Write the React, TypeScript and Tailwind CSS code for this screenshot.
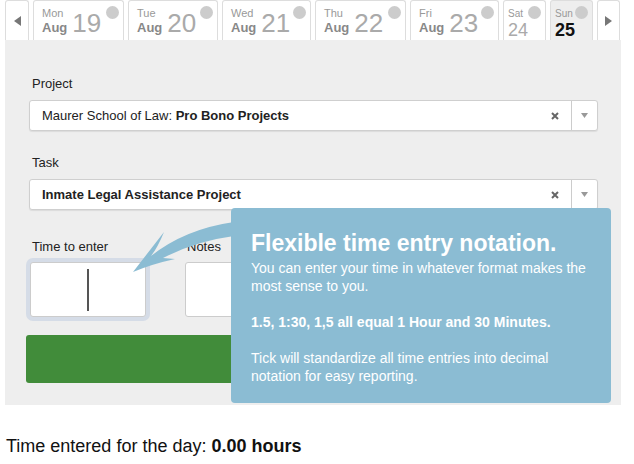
import React from "react";

type Day = { day: string; mon?: string; num: string; w: string; narrow?: boolean; active?: boolean };

const DAYS: Day[] = [
  { day: "Mon", mon: "Aug", num: "19", w: "w-[91px]" },
  { day: "Tue", mon: "Aug", num: "20", w: "w-[90px]" },
  { day: "Wed", mon: "Aug", num: "21", w: "w-[89px]" },
  { day: "Thu", mon: "Aug", num: "22", w: "w-[91px]" },
  { day: "Fri", mon: "Aug", num: "23", w: "w-[89px]" },
  { day: "Sat", num: "24", w: "w-[43px]", narrow: true },
  { day: "Sun", num: "25", w: "w-[43px]", narrow: true, active: true },
];

function DayTab({ d }: { d: Day }) {
  return (
    <div
      className={`relative h-10 ${d.w} border border-b-0 border-[#ddd] rounded-t-[3px] ${
        d.active ? "bg-[#eee]" : "bg-white"
      }`}
    >
      {d.narrow ? (
        <div className="pl-[4px] pt-[8px] leading-none">
          <div className="text-[10px] text-[#999]">{d.day}</div>
          <div
            className={`mt-[2px] text-[18px] ${
              d.active ? "font-bold text-[#111]" : "text-[#aaa]"
            }`}
          >
            {d.num}
          </div>
        </div>
      ) : (
        <div className="pl-[8px] pt-[7px] leading-none whitespace-nowrap">
          <span className="inline-block align-baseline">
            <span className="block text-[11px] text-[#999]">{d.day}</span>
            <span className="block mt-[2px] text-[13px] font-bold text-[#888]">{d.mon}</span>
          </span>
          <span className="ml-[5px] text-[26px] text-[#aaa]">{d.num}</span>
        </div>
      )}
      <span className="absolute top-[5px] right-[4px] w-[13px] h-[13px] rounded-full bg-[#ccc]" />
    </div>
  );
}

function Caret({ dir }: { dir: "left" | "right" }) {
  return (
    <svg width="7" height="10" viewBox="0 0 7 10">
      {dir === "left" ? (
        <path d="M7 0 L0 5 L7 10 Z" fill="#777" />
      ) : (
        <path d="M0 0 L7 5 L0 10 Z" fill="#777" />
      )}
    </svg>
  );
}

function Select({ children }: { children: React.ReactNode }) {
  return (
    <div className="h-[31px] bg-white border border-[#cfcfcf] rounded-[3px] shadow-[0_1px_1px_rgba(0,0,0,0.08)] flex items-center">
      <div className="flex-1 pl-3 text-[13px] text-[#222]">{children}</div>
      <svg width="8" height="8" viewBox="0 0 8 8" className="mr-[12px]">
        <path d="M1 1 L7 7 M7 1 L1 7" stroke="#666" strokeWidth="2" />
      </svg>
      <div className="w-[26px] h-full border-l border-[#ccc] flex items-center justify-center">
        <svg width="7" height="5" viewBox="0 0 7 5">
          <path d="M0 0 L7 0 L3.5 5 Z" fill="#999" />
        </svg>
      </div>
    </div>
  );
}

export default function App() {
  return (
    <div className="relative w-[634px] h-[464px] bg-white overflow-hidden font-['Liberation_Sans',Arial,sans-serif]">
      <div className="flex gap-1 pl-[5px] h-10">
        <div className="w-[24px] h-10 bg-white border border-b-0 border-[#ddd] rounded-t-[3px] flex items-center justify-center">
          <Caret dir="left" />
        </div>
        {DAYS.map((d) => (
          <DayTab key={d.day} d={d} />
        ))}
        <div className="w-[23px] h-10 bg-white border border-b-0 border-[#ddd] rounded-t-[3px] flex items-center justify-center">
          <Caret dir="right" />
        </div>
      </div>

      <div className="relative ml-[5px] w-[616px] h-[365px] bg-[#eee] pt-[36px] pl-[24px] pr-[23px]">
        <div className="text-[13px] leading-4 text-[#222] pl-[3px]">Project</div>
        <div className="mt-2">
          <Select>
            Maurer School of Law: <b>Pro Bono Projects</b>
          </Select>
        </div>

        <div className="mt-6 text-[13px] leading-4 text-[#222] pl-[3px]">Task</div>
        <div className="mt-2">
          <Select>
            <b>Inmate Legal Assistance Project</b>
          </Select>
        </div>

        <div className="mt-[29px] flex gap-[39px] pl-px">
          <div className="w-[116px]">
            <div className="text-[13px] leading-4 text-[#222] pl-[2px]">Time to enter</div>
            <div className="mt-[7px] h-[55px] bg-white border border-[#ccc] rounded-[3px] ring-4 ring-[#d5dce7] flex items-center justify-center">
              <div className="w-[2px] h-[42px] bg-[#555]" />
            </div>
          </div>
          <div className="flex-1">
            <div className="text-[13px] leading-4 text-[#222] pl-[2px]">Notes</div>
            <div className="mt-[7px] h-[55px] bg-white border border-[#ccc] rounded-[3px]" />
          </div>
        </div>

        <div className="mt-[18px] -ml-[3px] h-[48px] bg-[#418c3a] rounded-[3px]" />

        <div className="absolute left-[226px] top-[168px] w-[380px] h-[195px] bg-[#8bbcd3] rounded-[4px] pl-[20px] pt-[22px] text-white">
          <div className="text-[23px] leading-[26px] font-bold">Flexible time entry notation.</div>
          <p className="mt-[3px] text-[14px] leading-[18px]">
            You can enter your time in whatever format makes the
            <br />
            most sense to you.
          </p>
          <p className="mt-[18px] text-[14px] leading-[18px] font-bold">
            1.5, 1:30, 1,5 all equal 1 Hour and 30 Minutes.
          </p>
          <p className="mt-[18px] text-[14px] leading-[18px]">
            Tick will standardize all time entries into decimal
            <br />
            notation for easy reporting.
          </p>
        </div>
      </div>

      <svg
        className="absolute left-[120px] top-[215px] pointer-events-none"
        width="120"
        height="70"
        viewBox="120 215 120 70"
      >
        <path
          d="M133 272 L164 232 Q158 247 151 256 Q185 229 234 222 L234 236 Q196 241 163 258 L175 259 Q152 264 133 272 Z"
          fill="#8bbcd3"
        />
      </svg>

      <p className="mt-[31px] ml-[6px] text-[18px] leading-5 text-[#111]">
        Time entered for the day: <b>0.00 hours</b>
      </p>
    </div>
  );
}
